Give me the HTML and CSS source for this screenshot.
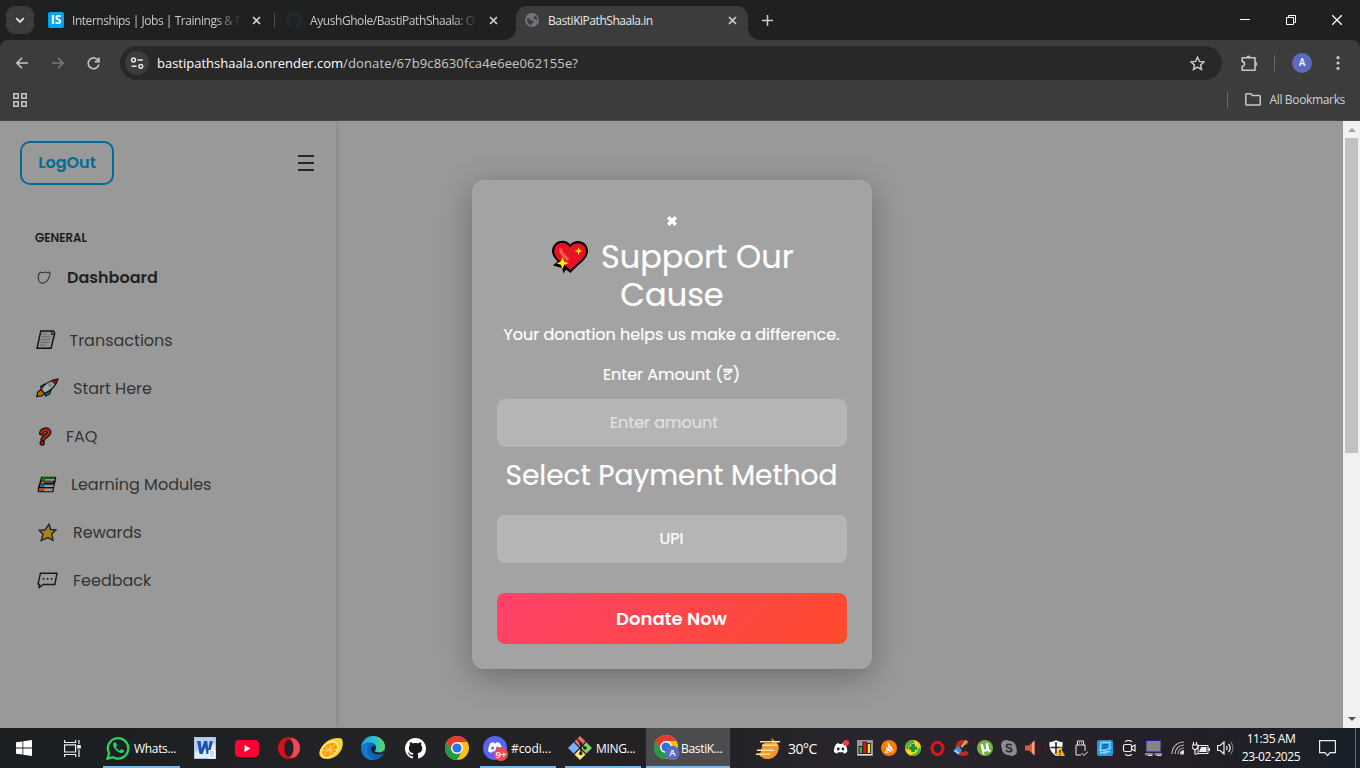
FILE: index.html
```html
<!DOCTYPE html>
<html lang="en">
<head>
<meta charset="utf-8">
<title>BastiKiPathShaala.in</title>
<link rel="stylesheet" href="styles.css">
</head>
<body>
<div class="screen">
  <header class="tabstrip">
    <div class="tab-search"><svg width="10" height="7" viewBox="0 0 10 7"><path d="M1.2 1.2 5 5l3.8-3.8" fill="none" stroke="#e3e3e3" stroke-width="1.8"/></svg></div>
    <div class="tab first">
      <span class="is-icon">IS</span>
      <span class="tab-title fade">Internships | Jobs | Trainings &amp; P</span>
      <svg class="x" width="9" height="9" viewBox="0 0 9 9"><path d="M1 1l7 7M8 1 1 8"/></svg>
    </div>
    <i class="tab-sep"></i>
    <div class="tab second">
      <svg width="16" height="16" viewBox="0 0 16 16"><path fill="#24292f" fill-rule="evenodd" d="M8 0C3.58 0 0 3.58 0 8c0 3.54 2.29 6.53 5.47 7.59.4.07.55-.17.55-.38 0-.19-.01-.82-.01-1.49-2.01.37-2.53-.49-2.69-.94-.09-.23-.48-.94-.82-1.13-.28-.15-.68-.52-.01-.53.63-.01 1.08.58 1.23.82.72 1.21 1.87.87 2.33.66.07-.52.28-.87.51-1.07-1.78-.2-3.64-.89-3.64-3.95 0-.87.31-1.59.82-2.15-.08-.2-.36-1.02.08-2.12 0 0 .67-.21 2.2.82.64-.18 1.32-.27 2-.27s1.36.09 2 .27c1.53-1.04 2.2-.82 2.2-.82.44 1.1.16 1.92.08 2.12.51.56.82 1.27.82 2.15 0 3.07-1.87 3.75-3.65 3.95.29.25.54.73.54 1.48 0 1.07-.01 1.93-.01 2.2 0 .21.15.46.55.38A8.01 8.01 0 0 0 16 8c0-4.42-3.58-8-8-8z"/></svg>
      <span class="tab-title fade">AyushGhole/BastiPathShaala: O</span>
      <svg class="x" width="9" height="9" viewBox="0 0 9 9"><path d="M1 1l7 7M8 1 1 8"/></svg>
    </div>
    <div class="tab active">
      <svg width="14" height="14" viewBox="0 0 14 14"><circle cx="7" cy="7" r="7" fill="#71757b"/><path d="M2 5.400h2.500l1.500 2.200h2.400v2.400l-2 .8v1.600C3.800 12 2 9.500 2 7zM6 1.800h3l1 1.200-1.500 1.200 .4 1.800 3 .5v2.500c1.200-3.500-.6-6.500-3.500-7.200z" fill="#3c3c3c"/></svg>
      <span class="tab-title">BastiKiPathShaala.in</span>
      <svg class="x" width="9" height="9" viewBox="0 0 9 9"><path d="M1 1l7 7M8 1 1 8"/></svg>
    </div>
    <svg class="plus" width="11" height="11" viewBox="0 0 11 11"><path d="M5.500 0v11M0 5.500h11" stroke="#c9c9c9" stroke-width="1.500"/></svg>
    <div class="win-controls">
      <svg width="10" height="10" viewBox="0 0 10 10"><path d="M0 4.500h10" stroke="#fff"/></svg>
      <svg width="10" height="10" viewBox="0 0 10 10"><path d="M.5 2.500h7v7h-7zM2.500 2.500v-2h7v7h-2" fill="none" stroke="#fff"/></svg>
      <svg width="10" height="10" viewBox="0 0 10 10"><path d="M0 0l10 10M10 0 0 10" stroke="#fff" stroke-width="1.300"/></svg>
    </div>
  </header>

  <div class="toolbar">
    <svg class="nav-back" width="12" height="12" viewBox="0 0 12 12"><path d="M6 .7.9 6 6 11.300M1 6h11" fill="none" stroke="#c7c7c7" stroke-width="1.600"/></svg>
    <svg class="nav-fwd" width="12" height="12" viewBox="0 0 12 12"><path d="M6 .7 11.100 6 6 11.300M11 6H0" fill="none" stroke="#7a7a7a" stroke-width="1.600"/></svg>
    <svg class="nav-reload" width="13" height="13" viewBox="0 0 13 13"><path d="M11.400 3.800A5.400 5.400 0 1 0 11.900 7.500M12 .4v4.200H7.800" fill="none" stroke="#c7c7c7" stroke-width="1.600"/></svg>
    <div class="omnibox">
      <span class="site-info"><svg width="14" height="12" viewBox="0 0 14 12" fill="none" stroke="#e3e3e3" stroke-width="1.500"><circle cx="3.500" cy="3" r="1.900"/><path d="M7.500 3H13M1.500 9.300h5"/><circle cx="10.800" cy="9.300" r="1.900"/></svg></span>
      <span class="url"><b>bastipathshaala.onrender.com</b><em>/donate/67b9c8630fca4e6ee062155e?</em></span>
      <svg class="star" width="15" height="15" viewBox="0 0 15 15"><path d="M7.500 1.200l1.900 4.200 4.600.5-3.400 3.100.9 4.500-4-2.300-4 2.300.9-4.500L1 5.900l4.600-.5z" fill="none" stroke="#c7c7c7" stroke-width="1.500"/></svg>
    </div>
    <svg class="ext" width="17" height="17" viewBox="0 0 17 17"><path d="M1.200 2.800H14v12.400H1.200V11.200a2.200 2.200 0 0 0 0-4.600z" fill="none" stroke="#c7c7c7" stroke-width="1.600" stroke-linejoin="round"/><path d="M5.500 2.500a2 2 0 0 1 4 0zM14.300 7a2 2 0 0 1 0 4z" fill="#c7c7c7"/></svg>
    <i class="bar-sep"></i>
    <span class="avatar">A</span>
    <svg class="kebab" width="4" height="14" viewBox="0 0 4 14" fill="#c7c7c7"><circle cx="2" cy="1.700" r="1.600"/><circle cx="2" cy="7" r="1.600"/><circle cx="2" cy="12.300" r="1.600"/></svg>
  </div>

  <div class="bookmarks">
    <svg width="14" height="14" viewBox="0 0 14 14" fill="none" stroke="#c7c7c7" stroke-width="1.500"><path d="M.8.8h4.400v4.400H.8zM8.800.8h4.400v4.400H8.800zM.8 8.800h4.400v4.400H.8zM8.800 8.800h4.400v4.400H8.800z"/></svg>
    <div class="all-bm">
      <i class="bar-sep"></i>
      <svg width="16" height="13" viewBox="0 0 16 13"><path d="M.8 1.600Q.8.800 1.600.8h4.200l1.600 1.700h7q.8 0 .8.800v7.900q0 .8-.8.800H1.600q-.8 0-.8-.8z" fill="none" stroke="#c7c7c7" stroke-width="1.500"/></svg>
      <span>All Bookmarks</span>
    </div>
  </div>

  <div class="page">
    <aside class="sidebar">
      <div class="side-head">
        <span class="logout">LogOut</span>
        <svg width="16" height="16" viewBox="0 0 16 16"><path d="M0 1h16M0 8h16M0 15h16" stroke="#000" stroke-width="1.700"/></svg>
      </div>
      <div class="general">GENERAL</div>
      <div class="dash">
        <svg width="15" height="15" viewBox="0 0 15 15"><path d="M3.300 2.300C1.600 3.500 1 6.500 1.500 9c.6 3 2.500 4.500 5 4 3-.8 4.500-3 5.500-5.500.8-2 1.300-3.800.8-5.100-.9-.7-1.800.2-2.700.3-1.200 0-1.400-.8-2.400-.6-1 0-1.300.7-2.300.6-1 0-1.300-.7-2.100-.4z" fill="none" stroke="#333" stroke-width="1.100"/></svg>
        <span>Dashboard</span>
      </div>
      <ul class="menu">
        <li><span class="ic w1"><svg width="20" height="20" viewBox="0 0 20 20"><path d="M4.800 1h12.700l1.200 2-3.600 15.300H1z" fill="#909090" stroke="#111" stroke-width="1.400"/><path d="M16 1.500l-.4 2.800h2.600" fill="none" stroke="#111"/><path d="M6 4h5M5.500 6.800h9M5 9.500h9M4.500 12.300h9M4 15h5" stroke="#666" stroke-width=".9"/></svg></span>Transactions</li>
        <li><span class="ic w2"><svg width="23" height="20" viewBox="0 0 23 20" stroke="#111" stroke-width="1.200"><path d="M4.500 8.500l4-2.500h5l-7 7zM9.500 18l4-2 2.500-6.500-7 6z" fill="#087ba0"/><path d="M.8 18.500l1-4.500 3.200-2.500 4 4-3.500 2.500z" fill="#b06a12"/><path d="M5 11.500C8.500 6 14 2 22 1c-2 6.500-7.500 12-13.500 14.500z" fill="#a8a8a8"/><path d="M15.500 2.800C17.500 1.800 20 1.200 22 1c-.6 2-1.600 4-2.800 5.600z" fill="#9b1018" stroke-width=".8"/><circle cx="14" cy="7" r="1.700" fill="#888" stroke="#777" stroke-width=".6"/></svg></span>Start Here</li>
        <li><span class="ic w3"><svg width="14" height="19" viewBox="0 0 14 19"><path d="M3.500 6C4 2.500 10.500 1.500 11 5c.3 3-5 4-6 7" fill="none" stroke="#111" stroke-width="5" stroke-linecap="round"/><circle cx="4.200" cy="16" r="2.700" fill="#111"/><path d="M3.500 6C4 2.500 10.500 1.500 11 5c.3 3-5 4-6 7" fill="none" stroke="#a8240c" stroke-width="2.700" stroke-linecap="round"/><circle cx="4.200" cy="16" r="1.600" fill="#a8240c"/></svg></span>FAQ</li>
        <li><span class="ic w4"><svg width="20" height="17" viewBox="0 0 20 17"><path d="M4 .8h15.300l-.7 5-1.300 5-.9 5.500H.8V12l1.300-4.500L3.500 3z" fill="#111"/><path d="M5 1.600h13.300l-.3 1H8l-.8 2.200h-3z" fill="#118a11"/><path d="M8.300 3h9.400l-.5 1.700H7.700z" fill="#999"/><path d="M4.400 5.500h11.800v.9H7.500l-.5 1.200H3.800z" fill="#a88018"/><path d="M3.300 8.300H17v.8H6.500L6 11H2.700z" fill="#2a68ad"/><path d="M7 9.200h9.600l-.5 1.900H6.500z" fill="#8aa8c4"/><path d="M2.200 12h13.900v.8H6.800l-.6 2.500H1.700z" fill="#b54c16"/><path d="M7.200 12.800h8.500l-.4 2.500H6.600z" fill="#999"/></svg></span>Learning Modules</li>
        <li><span class="ic w5"><svg width="19" height="19" viewBox="0 0 19 19"><path d="M11 1.200l1.600 5.300 5.400.3-4.200 4.200 1.100 6.300-5-2.700-6.700 3 1.800-6.300L1.200 7.300l5.900-.5z" fill="#a58318" stroke="#222" stroke-width="1.400"/></svg></span>Rewards</li>
        <li><span class="ic w6"><svg width="21" height="17" viewBox="0 0 21 17"><path d="M3.500 1.200H20l-2.200 11.300H6L2 15.800l.5-3.300L1 12z" fill="#999" stroke="#1a1a1a" stroke-width="1.400" stroke-linejoin="round"/><path d="M5.700 6.800h1.700M9.700 6.800h1.700M13.700 6.800h1.700" stroke="#222" stroke-width="1.700"/></svg></span>Feedback</li>
      </ul>
    </aside>

    <main class="main">
      <section class="modal">
        <div class="close"><svg width="12" height="12" viewBox="0 0 12 12"><path d="M2.200 2.200l7.600 7.600M9.800 2.200 2.200 9.800" stroke="#fff" stroke-width="3.600"/></svg></div>
        <h2><svg class="heart" width="38" height="34" viewBox="0 0 38 34"><path d="M19 4.500C24-1.500 37 0 37 11.500 36.500 20 25 26 19.500 33l-4.500-3.500-2.500 4-1.500-5.500-9-2.500 4.500-4C3 17.500 1 14.500 1 10.500 2.500-.5 15-1.500 19 4.500z" fill="#000"/><path d="M19 7.500C22.500 1 35 1.500 35 11.500 34.500 19 24.500 24 19.300 30 12 22.500 3.200 19 3.200 11 4 1 15.500 1 19 7.500z" fill="#e81224"/><path d="M9.500 8.500c-.5 6 5 8 8 11.500" fill="none" stroke="#f4594a" stroke-width="3.400"/><path d="M11.500 17l1.600 4.600 4.700 1.600-4.700 1.600-1.600 4.500-1.600-4.500-4.500-1.600 4.500-1.600zM27.500 7.300l1.100 2.700 2.700 1.100-2.700 1-1.100 2.800-1-2.800-2.800-1 2.800-1.100z" fill="#fff100"/></svg> Support Our Cause</h2>
        <p>Your donation helps us make a difference.</p>
        <label>Enter Amount (₹)</label>
        <div class="field amount">Enter amount</div>
        <h3>Select Payment Method</h3>
        <div class="field">UPI</div>
        <div class="donate">Donate Now</div>
      </section>
    </main>
    <div class="scroll"><i class="up"></i><div class="thumb"></div><i class="down"></i></div>
  </div>

  <footer class="taskbar">
    <div class="slot wide"><svg width="16" height="16" viewBox="0 0 16 16" fill="#fff"><path d="M0 2.300l6.500-.9v6.200H0zM7.300 1.300 16 0v7.600H7.300zM0 8.400h6.500v6.200L0 13.700zM7.300 8.400H16V16l-8.700-1.300z"/></svg></div>
    <div class="slot wide"><svg width="17" height="17" viewBox="0 0 17 17" fill="none" stroke="#eee" stroke-width="1.200"><path d="M.6 0v2.500h11V0M.6 17v-2.500h11V17M.6 4.800h11v7.200H.6zM15 0v4M15 9.500V17"/><path d="M13.800 5.500h2.400v2.500h-2.400z" fill="#eee"/></svg></div>
    <div class="app open whats">
      <svg width="24" height="24" viewBox="0 0 24 24"><path d="M1.500 22.700l1.600-5.500A10.200 10.200 0 1 1 7 21.200z" fill="none" stroke="#25d366" stroke-width="2.300"/><path d="M8.200 6.500c-1.900 1.300-1.200 3.900.8 6.400 2.200 2.700 5.700 5 8 3.600 1-.7 1.200-1.800.9-2.200l-2.500-1.200-1.500 1.600c-1.500-.5-3.500-2.200-4-3.700l1.200-1.500-1.200-3c-.5-.4-1.200-.3-1.700 0z" fill="#25d366"/></svg><span>Whats...</span>
    </div>
    <div class="slot"><svg width="22" height="22" viewBox="0 0 22 22"><rect x=".5" y=".5" width="21" height="21" fill="#e3eefb" stroke="#a9c4e4"/><path d="M1 1h20v6L1 15z" fill="#b5d0f0"/><path d="M3 4h3.600l1 8 2.600-8h3l1 8 1.600-8h3l-3 13h-3.300l-1.300-7-2.500 7H5.600z" fill="#1c55ad"/><path d="M14.500 13h7v8.500h-7z" fill="#fff"/><path d="M16 15h4M16 17h4M16 19h4" stroke="#9bb6d8"/></svg></div>
    <div class="slot"><svg width="24" height="17" viewBox="0 0 24 17"><rect width="24" height="17" rx="4" fill="#f03"/><path d="M9.500 5v7l6-3.500z" fill="#fff"/></svg></div>
    <div class="slot"><svg width="22" height="22" viewBox="0 0 22 22"><path d="M11 0a11 11 0 1 0 0 22 11 11 0 0 0 0-22zm0 2.300c2.900 0 4.600 4 4.600 8.700s-1.700 8.700-4.600 8.700S6.400 15.700 6.400 11 8.100 2.300 11 2.300z" fill="#d8101c" fill-rule="evenodd"/><path d="M11 2.300C13 .9 16 1.300 18 2.600c5.300 4.500 5.300 12.300 0 16.800-2 1.300-5 1.700-7 .3 2.900 0 4.600-4 4.600-8.700S13.900 2.300 11 2.300z" fill="#ee4a50"/></svg></div>
    <div class="slot"><svg width="24" height="23" viewBox="0 0 24 23"><path d="M22.500 1.500c2 3 1.800 9-1.500 13.500-3.500 5-9.500 7.500-14 6.800C2.500 21.500-.5 19 .5 14.500 2 9 7.500 3.500 13 2c3.500-1 7-1.500 9.500-.5z" fill="#fbd42e"/><ellipse cx="10.500" cy="12.500" rx="10" ry="7" transform="rotate(-40 10.500 12.500)" fill="#fff6c8"/><ellipse cx="10.500" cy="12.700" rx="8.700" ry="5.900" transform="rotate(-40 10.500 12.700)" fill="#ff9a05"/><path d="M4 18l12.500-11M6.500 9.500l8 7M11 5.500v14M3 13.500l15-1" stroke="#ffe690" stroke-width=".8"/></svg></div>
    <div class="slot"><svg width="24" height="24" viewBox="0 0 24 24"><defs><linearGradient id="eg"><stop stop-color="#1b9de0"/><stop offset=".6" stop-color="#30c3c8"/><stop offset="1" stop-color="#62d84e"/></linearGradient></defs><circle cx="12" cy="12" r="12" fill="#0f62b5"/><path d="M.2 11C1 4.500 6 0 12 0c7 0 12 5 12 10.500 0 4-3.500 6-6.500 6-2.800 0-4.500-1-3.300-2.500C17 10 13.500 6.500 9.500 6.500 5.500 6.500 2 8 .2 11z" fill="url(#eg)"/><path d="M9 8.500c-5.500 4-2 12.500 4 15.300C5 25 0 18 .2 11c2-2.500 6-4 8.800-2.500z" fill="#1679cd"/><path d="M14.200 10c-2-.8-4.200 1-4 3.300.3 3 3 5.500 7 5.200 2.300 0 4-.5 5.500-1.600l1.500-2.500c-2 2-4.500 2.500-6.700 2.200-2.800-.3-4.500-1.200-3.300-2.700.8-1.200.9-2.600 0-3.900z" fill="#1f2224"/></svg></div>
    <div class="slot"><svg width="21" height="21" viewBox="0 0 16 16"><circle cx="8" cy="8" r="7.500" fill="#191919"/><path fill="#fff" d="M8 0C3.580 0 0 3.580 0 8c0 3.540 2.290 6.530 5.470 7.590.4.070.55-.17.55-.38 0-.19-.01-.82-.01-1.490-2.010.37-2.530-.49-2.690-.94-.09-.23-.48-.94-.82-1.130-.28-.15-.68-.52-.01-.53.63-.01 1.080.58 1.230.82.72 1.210 1.870.87 2.330.66.070-.52.280-.87.510-1.070-1.780-.2-3.640-.89-3.640-3.950 0-.87.310-1.590.820-2.150-.08-.2-.36-1.020.080-2.120 0 0 .67-.21 2.200.82.640-.18 1.320-.27 2-.27s1.360.090 2 .27c1.530-1.040 2.200-.82 2.200-.82.440 1.100.16 1.920.080 2.120.51.560.82 1.270.82 2.150 0 3.070-1.870 3.750-3.650 3.950.290.250.540.730.540 1.480 0 1.070-.01 1.930-.01 2.200 0 .210.150.460.550.380A8.010 8.010 0 0 0 16 8c0-4.420-3.580-8-8-8z"/></svg></div>
    <div class="slot"><svg width="24" height="24" viewBox="0 0 24 24"><circle cx="12" cy="12" r="12" fill="#fbc116"/><path d="M1.600 6A12 12 0 0 1 22.400 6H12l-5.200 9z" fill="#e33b2e"/><path d="M1.600 6A12 12 0 0 0 12 24l5.200-9H6.800z" fill="#229a48"/><circle cx="12" cy="12" r="6" fill="#fff"/><circle cx="12" cy="12" r="4.600" fill="#2b74e8"/></svg></div>
    <div class="app open disc">
      <svg width="25" height="25" viewBox="0 0 25 25"><circle cx="12" cy="12" r="12" fill="#5865f2"/><path d="M7.500 7l3-1 .7 1.200h1.800l.7-1.200 3 1c1.800 2.600 2.600 5.500 2.300 8.500l-3.200 1.600-1-1.500h-5.400l-1 1.500-3.200-1.600C5 12.500 5.800 9.600 7.500 7z" fill="#fff"/><circle cx="9.700" cy="12" r="1.500" fill="#5865f2"/><circle cx="14.500" cy="12" r="1.500" fill="#5865f2"/><circle cx="18" cy="18" r="7" fill="#f04a50"/><text x="18" y="21.500" class="badge">9+</text></svg><span>#codi...</span>
    </div>
    <div class="app open git">
      <svg width="24" height="24" viewBox="0 0 24 24"><path d="M12 0l5.500 5.500L12 11 6.500 5.500z" fill="#f36e72"/><path d="M5.700 6.300 11.200 12l-5.500 5.600L0 12z" fill="#7aaeff"/><path d="M18.300 6.300 24 12l-5.700 5.600L12.800 12z" fill="#80d468"/><path d="M12 13l5.500 5.500L12 24l-5.500-5.500z" fill="#fee27c"/><path d="M9 3l4 4v11M13 8l4 4" fill="none" stroke="#2a2522" stroke-width="1.600"/><circle cx="12.800" cy="7.500" r="1.800" fill="#2a2522"/><circle cx="17" cy="12" r="1.800" fill="#2a2522"/><circle cx="12.800" cy="17.500" r="1.800" fill="#2a2522"/></svg><span>MING...</span>
    </div>
    <div class="app open current">
      <svg width="26" height="26" viewBox="0 0 26 26"><circle cx="12" cy="12" r="12" fill="#fbc116"/><path d="M1.600 6A12 12 0 0 1 22.400 6H12l-5.200 9z" fill="#e33b2e"/><path d="M1.600 6A12 12 0 0 0 12 24l5.200-9H6.800z" fill="#229a48"/><circle cx="12" cy="12" r="6" fill="#fff"/><circle cx="12" cy="12" r="4.600" fill="#2b74e8"/><circle cx="18.300" cy="18" r="7.300" fill="#5c6bc0"/><text x="18.300" y="21.300" class="badge">A</text></svg><span>BastiK...</span>
    </div>
    <div class="weather">
      <svg width="25" height="22" viewBox="0 0 25 22"><path d="M15.500 0c.3 1.500 2.500 3.500 4.500 5l2.500 3c1.500 7-3.500 14-10.500 14-4 0-7.500-1.800-9.500-5l2.500-2 .5-4L8 6h8z" fill="#f1982f"/><path d="M4 4.700h20M6 8.300h15M1 13.300h17M0 17.300h14" stroke="#fbe2a4" stroke-width="1.500"/></svg><span>30°C</span>
    </div>
    <div class="tray">
      <i><svg width="16" height="16" viewBox="0 0 16 16"><path d="M3.200 4l2.500-1 .6 1h2.600l.6-1 2.500 1c1.700 2.400 2.500 5.200 2.200 8l-3 1.700-1-1.500H5L4 13.700 1 12C.7 9.200 1.500 6.400 3.200 4z" fill="#fff"/><circle cx="5.300" cy="9" r="1.400" fill="#26242b"/><circle cx="9.900" cy="9" r="1.400" fill="#26242b"/><circle cx="13" cy="3" r="3" fill="#f23f43"/></svg></i>
      <i><svg width="16" height="16" viewBox="0 0 16 16"><path d="M0 0h16v16H0z" fill="#999"/><path d="M1 13.500h14V15H1z" fill="#ddd"/><path d="M1.500 6h4v8h-4zM5.500 1.500h4.500V14H5.500zM10 3h4v11h-4z" fill="#222"/><path d="M2.500 7h2.500v6H2.500z" fill="#1fbf2f"/><path d="M6.300 2.500h2.900V13H6.300z" fill="#e11"/><path d="M10.700 4h2.500v9h-2.500z" fill="#f5e21c"/></svg></i>
      <i><svg width="16" height="16" viewBox="0 0 16 16"><circle cx="8" cy="8" r="8" fill="#ff7800"/><path d="M6.500 2.500c1.200 0 5.800 6.500 6.500 10-1-2-4-4-6-5zM5.500 7c2 1 5 3.500 6 6-1.500-1.300-4.500-2.500-6.500-2.500zM4.500 11.300c1.500 0 3 .6 4 1.500H3.500z" fill="#fff"/></svg></i>
      <i><svg width="16" height="16" viewBox="0 0 16 16"><circle cx="8" cy="8" r="8" fill="#f7d51d"/><path d="M0 8a8 8 0 0 1 8-8l2 3C6 3 3 6 3 10zM16 8a8 8 0 0 1-12 7c5 0 8-2 9-7z" fill="#52b043"/><path d="M6.300 4h3.400v2.500H12v3.200H9.700V12H6.300V9.700H4V6.500h2.300z" fill="#15913a"/></svg></i>
      <i><svg width="15" height="15" viewBox="0 0 15 15"><ellipse cx="7.500" cy="7.500" rx="5.500" ry="6" fill="none" stroke="#e0101f" stroke-width="3.200"/></svg></i>
      <i><svg width="16" height="16" viewBox="0 0 16 16"><path d="M14.500 4C11 0 4.500 2 4.500 8s6.500 7.500 10 4" fill="none" stroke="#c42a1e" stroke-width="4"/><path d="M12.500 0 15 1.500 9 8 7.500 6.500z" fill="#d9a066"/><path d="M5 6l4 4-3 5-6-4z" fill="#3d8fd6"/><path d="M2 10.500l3.500 3" stroke="#dcefff" stroke-width="1.500"/></svg></i>
      <i><svg width="16" height="16" viewBox="0 0 16 16"><circle cx="8" cy="8" r="8" fill="#6fb53f"/><path d="M3.500 4.500 6 4l1 4.500c.5 1.700 2.400 1.500 2.300-.2L8.600 3.500l2.500-.4 1 6c.3 1.200 1 1.500 2 1l-.8 1.600c-1.400.4-2.500-.1-3-1.200-1 1.500-2.600 1.600-3.600.6L7.500 15l-1.800-1z" fill="#fff"/></svg></i>
      <i><svg width="16" height="16" viewBox="0 0 16 16"><rect x="0" y="0" width="10" height="10" rx="5" fill="#8a8d91"/><rect x="6" y="6" width="10" height="10" rx="5" fill="#8a8d91"/><circle cx="8" cy="8" r="7.300" fill="#8a8d91"/><path d="M10.800 5.500C10 3.800 5.400 3.800 5.400 6.200c0 2.300 5.300 1.200 5.300 3.700 0 2.300-4.800 2.300-5.600.3" fill="none" stroke="#333" stroke-width="1.800"/></svg></i>
      <i><svg width="16" height="16" viewBox="0 0 16 16"><path d="M0 5.500h4L9.500.5v15L4 10.500H0z" fill="#d9583e"/><path d="M7 3l2.500-2.500v15L7 13z" fill="#f3a08a"/><path d="M12 4c1.500 2 1.500 6 0 8M14 2.500c2 3 2 8 0 11" fill="none" stroke="#451f1c" stroke-width="1.200"/></svg></i>
      <i><svg width="16" height="16" viewBox="0 0 16 16"><path d="M7 0c2 1.500 4 2 6.500 2C14 8 12 13 7 15.500 2 13 0 8 .5 2 3 2 5 1.500 7 0z" fill="#fff"/><path d="M7 2v12M1.500 7.500h11" stroke="#222" stroke-width="1.600"/><path d="M11 6.500l5 9.500H6z" fill="#fbb31a"/><path d="M11 10v3M11 14v1.300" stroke="#222" stroke-width="1.300"/></svg></i>
      <i><svg width="13" height="17" viewBox="0 0 13 17" fill="none" stroke="#eee"><path d="M2.500 5V1h6v4M1 5h9v6M1 5v10h5M4.500 2.500v1M6.500 2.500v1M6.500 13l2.500 2.500 4-4"/></svg></i>
      <i><svg width="16" height="16" viewBox="0 0 16 16"><rect width="16" height="16" rx="2" fill="#219ae0"/><path d="M4 2.500h9v6l-7 2H3zM3 13l10-1.500M8 11v3" fill="none" stroke="#9ed9fa" stroke-width="1.300"/><path d="M5.500 5h5.500M5.500 7.500H10" stroke="#125f98" stroke-width="1.400"/></svg></i>
      <i><svg width="15" height="16" viewBox="0 0 15 16" fill="none" stroke="#eee" stroke-width="1.200"><rect x="1.500" y="4.500" width="8" height="7" rx="1.500"/><path d="M9.500 7l3.500-2v6l-3.500-2M3 1.800C5 .3 8 .3 10 1.800M3 14.200c2 1.500 5 1.500 7 0"/></svg></i>
      <i><svg width="17" height="16" viewBox="0 0 17 16"><path d="M1 .5h15v11.500H1z" fill="#848484" stroke="#20208a"/><path d="M0 13h8v2.500H0zM9.500 13H17v2.500H9.500z" fill="#8b8b8b"/><path d="M3 15.500h4M12 15.500h4" stroke="#ddd"/></svg></i>
      <i><svg width="13" height="14" viewBox="0 0 13 14" fill="none" stroke="#bbb" stroke-width="1.200"><path d="M1 13C1 6 6 1 13 1M4 13c0-5 4-9 9-9M7 13c0-3.500 2.500-6 6-6"/><path d="M9.500 13c0-2 1.500-3.500 3.500-3.500V13z" fill="#fff"/></svg></i>
      <i><svg width="18" height="13" viewBox="0 0 18 13"><path d="M6 3.500h10v8H6z" fill="none" stroke="#eee"/><path d="M16.500 6H18v3h-1.500zM9 5h5.500v5H7z" fill="#eee"/><path d="M1.500 0v3M4.500 0v3M0 3h6v2.500L4 7.500H2L0 5.500zM3 7v5h3" fill="none" stroke="#eee" stroke-width="1.200"/></svg></i>
      <i><svg width="17" height="14" viewBox="0 0 17 14" fill="none" stroke="#eee" stroke-width="1.200"><path d="M.6 4.500h2.600L7 1v12L3.200 9.500H.6zM9.300 5c.8 1 .8 3 0 4M11.500 3c1.900 2.300 1.900 5.700 0 8"/><path d="M13.700 1c3 3.400 3 8.600 0 12" stroke="#777"/></svg></i>
    </div>
    <div class="clock"><span>11:35 AM</span><span>23-02-2025</span></div>
    <svg class="notif" width="17" height="17" viewBox="0 0 17 17"><path d="M.600.600h15.800v12H11l-2.500 3-2.500-3H.6z" fill="none" stroke="#eee" stroke-width="1.200"/></svg>
    <i class="peek"></i>
  </footer>
</div>
</body>
</html>
```
FILE: styles.css
```css
* { box-sizing: border-box; }
body { margin: 0; font-family: "Open Sans", "Noto Sans", sans-serif; }
svg { display: block; flex: none; }
i, em { font-style: normal; }

.screen { width: 1360px; height: 768px; display: flex; flex-direction: column; overflow: hidden; background: #1f2120; }

/* Browser tabs */
.tabstrip { height: 40px; flex: none; display: flex; align-items: center; padding-left: 6px; background: #1f2120; }
.tab-search { width: 28px; height: 28px; border-radius: 9px; background: #3c3c3c; display: flex; align-items: center; justify-content: center; }
.tab { display: flex; align-items: center; font-size: 12px; letter-spacing: -0.46px; color: #c8c8c8; }
.tab-title { white-space: nowrap; flex: none; }
.tab .x { fill: none; stroke: #d0d0d0; stroke-width: 1.7; }
.fade { -webkit-mask-image: linear-gradient(90deg, #000 calc(100% - 26px), transparent); mask-image: linear-gradient(90deg, #000 calc(100% - 26px), transparent); }
.first { margin-left: 14px; width: 223px; }
.first .tab-title { margin-left: 8px; width: 169px; margin-right: 11px; }
.is-icon { width: 16px; height: 16px; border-radius: 2px; background: #00a5ec; color: #fff; font: 700 12px/16px "Open Sans", sans-serif; letter-spacing: 0; text-align: center; }
.tab-sep { width: 1px; height: 15px; margin-left: 3px; background: #4c4c4c; }
.second { margin-left: 11px; }
.second .tab-title { margin-left: 8px; width: 168px; margin-right: 11px; letter-spacing: -0.43px; }
.active { align-self: flex-end; position: relative; width: 232px; height: 34px; margin-left: 18px; padding: 0 0 6px 9px; border-radius: 11px 11px 0 0; background: #3c3c3c; color: #e8e8e8; }
.active::before, .active::after { content: ""; position: absolute; bottom: 0; width: 11px; height: 11px; }
.active::before { left: -11px; background: radial-gradient(circle at 0 0, transparent 10.5px, #3c3c3c 11px); }
.active::after { right: -11px; background: radial-gradient(circle at 100% 0, transparent 10.5px, #3c3c3c 11px); }
.active .tab-title { margin-left: 9px; width: 180px; }
.plus { margin-left: 14px; }
.win-controls { margin-left: auto; display: flex; gap: 36px; padding-right: 18px; }

/* Toolbar */
.toolbar { height: 46px; flex: none; display: flex; align-items: center; background: #3c3c3c; border-radius: 8px 8px 0 0; }
.nav-back { margin-left: 16px; }
.nav-fwd { margin-left: 24px; }
.nav-reload { margin-left: 23px; }
.omnibox { width: 1102px; height: 34px; margin-left: 20px; padding: 0 17px 0 5px; border-radius: 17px; background: #282828; display: flex; align-items: center; }
.site-info { width: 24px; height: 24px; border-radius: 50%; background: #3c3c3c; display: flex; align-items: center; justify-content: center; }
.url { margin-left: 8px; font-size: 13px; color: #c8c8c8; white-space: nowrap; }
.url b { font-weight: 400; color: #fff; }
.url em { letter-spacing: 0.13px; }
.star { margin-left: auto; }
.ext { margin-left: 19px; }
.bar-sep { width: 1px; height: 16px; background: #6a6a6a; }
.toolbar .bar-sep { margin-left: 16px; }
.avatar { width: 20px; height: 20px; margin-left: 17px; border-radius: 50%; background: #5c6bc0; color: #fff; font: 500 10px/20px Roboto, sans-serif; text-align: center; }
.kebab { margin-left: 24px; }

.bookmarks { height: 35px; flex: none; display: flex; align-items: center; padding: 0 15px 7px 13px; background: #3c3c3c; border-bottom: 1px solid #4a4a4a; }
.all-bm { margin-left: auto; display: flex; align-items: center; font-size: 12px; letter-spacing: -0.34px; color: #d2d2d2; }
.all-bm svg { margin: 0 8px 0 17px; }

/* Web page */
.page { flex: 1; display: flex; background: #999; font-family: Poppins, Inter, sans-serif; min-height: 0; -webkit-text-stroke: 0.2px currentColor; }
.sidebar { width: 336px; padding: 20px; box-shadow: 2px 0 5px rgba(0,0,0,.1); }
.side-head { display: flex; justify-content: space-between; align-items: center; padding-right: 2px; }
.logout { width: 94px; height: 44px; border: 2px solid #006c96; border-radius: 10px; color: #006c96; font-weight: 600; font-size: 16px; line-height: 40px; text-align: center; -webkit-text-stroke: 0; }
.general { margin: 43px 0 0 15px; font-size: 12px; font-weight: 500; line-height: 20px; color: #141519; }
.dash { display: flex; align-items: center; margin: 9px 0 0 17px; height: 40px; font-size: 16px; font-weight: 600; color: #202224; -webkit-text-stroke: 0; }
.dash span { margin-left: 15px; }
.menu { list-style: none; margin: 19px 0 0; padding: 0 0 0 16px; }
.menu li { height: 48px; display: flex; align-items: center; font-size: 16px; color: #333; -webkit-text-stroke: 0; }
.ic { flex: none; }
.w1 { width: 33.5px; }
.w2 { width: 37px; }
.w3 { width: 30px; padding-left: 2px; }
.w4 { width: 35px; padding-left: 1px; }
.w5 { width: 37px; padding-left: 2px; }
.w6 { width: 37px; padding-left: 1px; }

.main { flex: 1; padding: 59px 0 0 136px; }
.modal { width: 400px; height: 489px; padding: 25px; border-radius: 12px; background: #a3a3a3; box-shadow: 0 8px 32px rgba(0,0,0,.3); color: #fff; text-align: center; }
.close { height: 32px; margin-bottom: 1px; padding-right: 1px; display: flex; align-items: center; justify-content: center; }
.modal h2 { margin: 0; font-size: 32px; font-weight: 400; line-height: 38px; }
.heart { display: inline-block; vertical-align: -6px; margin: 0 3px 0 1px; }
.modal p { margin: 9px -1px 16px -2px; font-size: 16px; font-weight: 400; line-height: 24px; white-space: nowrap; }
.modal label { display: block; font-size: 16px; line-height: 24px; margin-bottom: 12px; padding-right: 1px; }
.modal h3 { margin: 12px 0 22px; padding-right: 1px; font-size: 28px; font-weight: 400; line-height: 34px; }
.field { height: 48px; border-radius: 8px; background: #b5b5b5; font-size: 16px; line-height: 48px; padding-right: 1px; }
.amount { padding-right: 16px; color: #e1e1e1; }
.donate { height: 51px; margin-top: 30px; padding-right: 1px; border-radius: 8px; background: linear-gradient(135deg, #ff416c, #ff4b2b); font-size: 18px; font-weight: 600; line-height: 52px; -webkit-text-stroke: 0; }

.scroll { width: 17px; background: #f1f1f1; display: flex; flex-direction: column; align-items: center; }
.up, .down { border: 4px solid transparent; border-top-width: 0; border-bottom: 4px solid #a3a3a3; margin: 7px 0 6px; }
.down { border-top: 4px solid #505050; border-bottom-width: 0; margin: auto 0 7px; }
.thumb { width: 13px; height: 315px; background: #c1c1c1; }

/* Taskbar */
.taskbar { height: 40px; flex: none; display: flex; align-items: center; background: linear-gradient(90deg, #1b1f22, #222326 30%, #232124 48%, #29252d 65%, #241f26 88%, #182029); color: #fff; font-size: 12px; }
.slot { width: 42px; display: flex; justify-content: center; }
.wide { width: 48px; }
.app { align-self: stretch; display: flex; align-items: center; border-bottom: 2px solid #76b9ed; padding: 2px 0 0 3px; white-space: nowrap; }
.app span { margin-left: 4px; letter-spacing: -0.32px; }
.whats { width: 77px; margin: 0 4px 0 7px; }
.disc { width: 76px; margin-left: 2px; }
.disc span { margin-left: 3px; letter-spacing: -0.07px; }
.git { width: 76px; margin-left: 9px; }
.current { width: 84px; margin-left: 5px; padding-left: 8px; background: #4c4c4e; }
.current span { margin-left: 1px; }
.badge { fill: #fff; font: 600 9.5px "Open Sans", sans-serif; text-anchor: middle; }
.weather { display: flex; align-items: center; margin-left: 26px; width: 73px; font-size: 14px; letter-spacing: -0.46px; }
.weather span { margin-left: 7px; }
.tray { display: flex; }
.tray i { width: 24px; height: 24px; display: flex; align-items: center; justify-content: center; }
.clock { width: 68px; display: flex; flex-direction: column; align-items: center; line-height: 18px; letter-spacing: -0.42px; }
.notif { margin-left: 14px; }
.peek { width: 1px; height: 40px; margin-left: auto; margin-right: 4px; background: #666; }
```
